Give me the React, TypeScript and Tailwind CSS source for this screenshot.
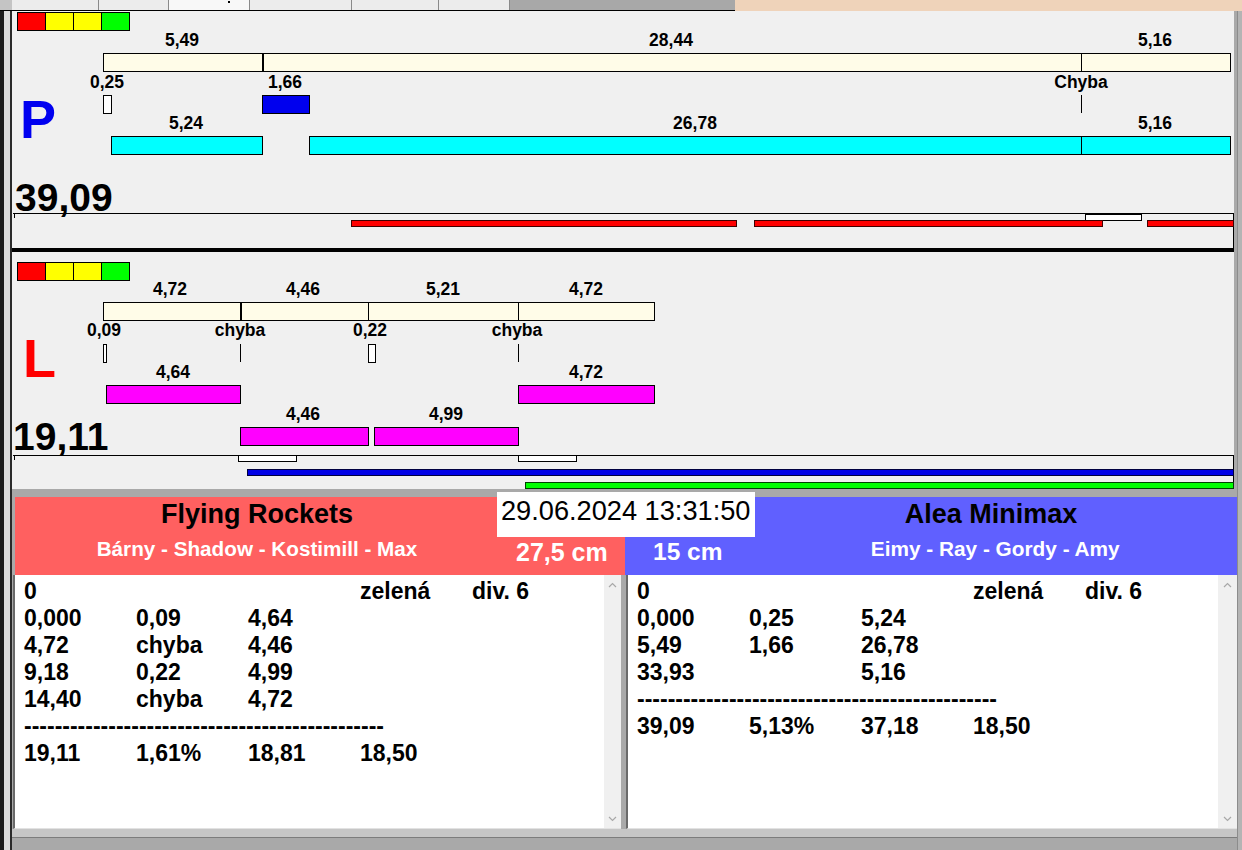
import React from 'react';

type R = { x: number; y: number; w: number; h: number; c: string };
type T = { x: number; y: number; t: string };

// all coordinates are page pixels, shifted by the panel origin when drawn
const pRects: R[] = [
  { x: 103, y: 53, w: 160, h: 19, c: 'border border-black bg-[#fffce8]' },
  { x: 263, y: 53, w: 819, h: 19, c: 'border border-black bg-[#fffce8]' },
  { x: 1081, y: 53, w: 150, h: 19, c: 'border border-black bg-[#fffce8]' },
  { x: 103, y: 95, w: 9, h: 19, c: 'border border-black bg-white' },
  { x: 262, y: 95, w: 48, h: 19, c: 'border border-black bg-[#0000ee]' },
  { x: 1081, y: 95, w: 1, h: 18, c: 'bg-black' },
  { x: 111, y: 136, w: 152, h: 19, c: 'border border-black bg-[#00ffff]' },
  { x: 309, y: 136, w: 773, h: 19, c: 'border border-black bg-[#00ffff]' },
  { x: 1081, y: 136, w: 150, h: 19, c: 'border border-black bg-[#00ffff]' },
  { x: 13, y: 213, w: 1221, h: 1, c: 'bg-black' },
  { x: 1233, y: 213, w: 1, h: 35, c: 'bg-black' },
  { x: 14, y: 213, w: 1, h: 5, c: 'bg-black' },
  { x: 1085, y: 214, w: 57, h: 7, c: 'border border-black bg-white' },
  { x: 351, y: 220, w: 386, h: 7, c: 'border border-[#400000] bg-[#ff0000]' },
  { x: 754, y: 220, w: 349, h: 7, c: 'border border-[#400000] bg-[#ff0000]' },
  { x: 1147, y: 220, w: 87, h: 7, c: 'border border-[#400000] bg-[#ff0000]' },
];

const pLabels: T[] = [
  { x: 182, y: 41, t: '5,49' },
  { x: 671, y: 41, t: '28,44' },
  { x: 1155, y: 41, t: '5,16' },
  { x: 107, y: 83, t: '0,25' },
  { x: 285, y: 83, t: '1,66' },
  { x: 1081, y: 83, t: 'Chyba' },
  { x: 186, y: 124, t: '5,24' },
  { x: 695, y: 124, t: '26,78' },
  { x: 1155, y: 124, t: '5,16' },
];

const lRects: R[] = [
  { x: 103, y: 302, w: 138, h: 19, c: 'border border-black bg-[#fffce8]' },
  { x: 241, y: 302, w: 128, h: 19, c: 'border border-black bg-[#fffce8]' },
  { x: 368, y: 302, w: 151, h: 19, c: 'border border-black bg-[#fffce8]' },
  { x: 518, y: 302, w: 137, h: 19, c: 'border border-black bg-[#fffce8]' },
  { x: 103, y: 344, w: 4, h: 19, c: 'border border-black bg-white' },
  { x: 240, y: 344, w: 1, h: 18, c: 'bg-black' },
  { x: 368, y: 344, w: 8, h: 19, c: 'border border-black bg-white' },
  { x: 518, y: 344, w: 1, h: 18, c: 'bg-black' },
  { x: 106, y: 385, w: 135, h: 19, c: 'border border-black bg-[#ff00ff]' },
  { x: 518, y: 385, w: 137, h: 19, c: 'border border-black bg-[#ff00ff]' },
  { x: 240, y: 427, w: 129, h: 19, c: 'border border-black bg-[#ff00ff]' },
  { x: 374, y: 427, w: 145, h: 19, c: 'border border-black bg-[#ff00ff]' },
  { x: 13, y: 455, w: 1221, h: 1, c: 'bg-black' },
  { x: 1233, y: 455, w: 1, h: 34, c: 'bg-black' },
  { x: 14, y: 455, w: 1, h: 5, c: 'bg-black' },
  { x: 238, y: 455, w: 59, h: 7, c: 'border border-black bg-white' },
  { x: 518, y: 455, w: 59, h: 7, c: 'border border-black bg-white' },
  { x: 247, y: 469, w: 987, h: 7, c: 'border border-[#000040] bg-[#0000e6]' },
  { x: 525, y: 482, w: 709, h: 7, c: 'border border-[#004000] bg-[#00ff00]' },
];

const lLabels: T[] = [
  { x: 170, y: 290, t: '4,72' },
  { x: 303, y: 290, t: '4,46' },
  { x: 443, y: 290, t: '5,21' },
  { x: 586, y: 290, t: '4,72' },
  { x: 104, y: 331, t: '0,09' },
  { x: 240, y: 331, t: 'chyba' },
  { x: 370, y: 331, t: '0,22' },
  { x: 517, y: 331, t: 'chyba' },
  { x: 173, y: 373, t: '4,64' },
  { x: 586, y: 373, t: '4,72' },
  { x: 303, y: 415, t: '4,46' },
  { x: 446, y: 415, t: '4,99' },
];

const leftRows = [
  ['0', '', '', 'zelená', 'div. 6'],
  ['0,000', '0,09', '4,64'],
  ['4,72', 'chyba', '4,46'],
  ['9,18', '0,22', '4,99'],
  ['14,40', 'chyba', '4,72'],
  ['-'],
  ['19,11', '1,61%', '18,81', '18,50'],
];

const rightRows = [
  ['0', '', '', 'zelená', 'div. 6'],
  ['0,000', '0,25', '5,24'],
  ['5,49', '1,66', '26,78'],
  ['33,93', '', '5,16'],
  ['-'],
  ['39,09', '5,13%', '37,18', '18,50'],
];

const DASHES = '-'.repeat(47);

function Legend({ ox, oy, x, y }: { ox: number; oy: number; x: number; y: number }) {
  return (
    <div className="absolute flex" style={{ left: x - ox, top: y - oy }}>
      <div className="h-[19px] w-[29px] border border-black bg-[#ff0000]" />
      <div className="-ml-px h-[19px] w-[29px] border border-black bg-[#ffff00]" />
      <div className="-ml-px h-[19px] w-[29px] border border-black bg-[#ffff00]" />
      <div className="-ml-px h-[19px] w-[29px] border border-black bg-[#00ff00]" />
    </div>
  );
}

function Chart({
  ox,
  oy,
  legendY,
  rects,
  labels,
  letter,
  letterCls,
  letterX,
  letterY,
  total,
  totalX,
  totalY,
}: {
  ox: number;
  oy: number;
  legendY: number;
  rects: R[];
  labels: T[];
  letter: string;
  letterCls: string;
  letterX: number;
  letterY: number;
  total: string;
  totalX: number;
  totalY: number;
}) {
  return (
    <div className="relative h-[237px] w-[1222px] overflow-hidden bg-[#f0f0f0]">
      <Legend ox={ox} oy={oy} x={17} y={legendY} />
      {rects.map((r, i) => (
        <div
          key={i}
          className={`absolute ${r.c}`}
          style={{ left: r.x - ox, top: r.y - oy, width: r.w, height: r.h }}
        />
      ))}
      {labels.map((l, i) => (
        <span
          key={i}
          className="absolute -translate-x-1/2 -translate-y-1/2 whitespace-nowrap text-[17.5px] font-bold leading-none text-black"
          style={{ left: l.x - ox, top: l.y - oy }}
        >
          {l.t}
        </span>
      ))}
      <span
        className={`absolute -translate-y-1/2 text-[54px] font-bold leading-none ${letterCls}`}
        style={{ left: letterX - ox, top: letterY - oy }}
      >
        {letter}
      </span>
      <span
        className="absolute -translate-y-1/2 text-[39px] font-bold leading-none text-black"
        style={{ left: totalX - ox, top: totalY - oy }}
      >
        {total}
      </span>
    </div>
  );
}

function Chevron({ up }: { up: boolean }) {
  return (
    <svg width="9" height="6" viewBox="0 0 9 6" className="block">
      <polyline
        points={up ? '1,5 4.5,1.5 8,5' : '1,1 4.5,4.5 8,1'}
        fill="none"
        stroke="#a8a8a8"
        strokeWidth="1.2"
      />
    </svg>
  );
}

function ListPanel({ rows, width, sb }: { rows: string[][]; width: string; sb: string }) {
  return (
    <div className={`flex h-[254px] border-l-2 border-b border-l-[#6a6a6a] border-b-[#e2e2e2] bg-white ${width}`}>
      <div className="flex-1 pl-[9px] pt-[3px] text-[23px] font-bold leading-[27px] text-black">
        {rows.map((row, i) => (
          <div key={i} className="flex h-[27px] whitespace-nowrap">
            {row[0] === '-' ? (
              <span>{DASHES}</span>
            ) : (
              row.map((c, j) => (
                <span key={j} className="w-[112px] shrink-0">
                  {c}
                </span>
              ))
            )}
          </div>
        ))}
      </div>
      <div className={`flex flex-col items-center justify-between bg-[#f0f0f0] pt-[7px] pb-[6px] ${sb}`}>
        <Chevron up />
        <Chevron up={false} />
      </div>
    </div>
  );
}

export default function App() {
  return (
    <div className="flex h-[850px] w-[1242px] flex-col overflow-hidden bg-[#a9a9a9] font-['Liberation_Sans',Arial,sans-serif]">
      {/* tab strip */}
      <div className="flex h-[11px] shrink-0">
        <div className="flex w-[735px] border-b border-black bg-[#e4e4e4]">
          <div className="w-[12px] bg-[#c4c4c4]" />
          <div className="w-[87px] border-r border-[#8a8a8a] bg-[#ececec]" />
          <div className="w-[70px] border-r border-[#8a8a8a] bg-[#ececec]" />
          <div className="relative w-[81px] border-r border-[#8a8a8a] bg-[#f8f8f8]">
            <div className="absolute left-[59px] top-[1px] h-[2px] w-[2px] bg-black" />
          </div>
          <div className="w-[102px] border-r border-[#8a8a8a] bg-[#ececec]" />
          <div className="w-[87px] border-r border-[#8a8a8a] bg-[#ececec]" />
          <div className="w-[71px] border-r border-[#8a8a8a] bg-[#ececec]" />
          <div className="flex-1 bg-[#a8a8a8]" />
        </div>
        <div className="flex-1 bg-[#efd3ba]" />
      </div>

      <div className="flex flex-1">
        {/* left frame */}
        <div className="flex w-[12px] shrink-0">
          <div className="w-[4px] bg-[#1c1c1c]" />
          <div className="w-[6px] bg-[#dcdcdc]" />
          <div className="w-[2px] bg-[#2a2a2a]" />
        </div>

        {/* main column */}
        <div className="flex w-[1225px] flex-col">
          <Chart
            ox={12}
            oy={11}
            legendY={12}
            rects={pRects}
            labels={pLabels}
            letter="P"
            letterCls="text-[#0000f0]"
            letterX={20}
            letterY={119}
            total="39,09"
            totalX={15}
            totalY={197}
          />
          <div className="h-[4px] w-[1222px] bg-black" />
          <Chart
            ox={12}
            oy={252}
            legendY={262}
            rects={lRects}
            labels={lLabels}
            letter="L"
            letterCls="text-[#ff0000]"
            letterX={23}
            letterY={358}
            total="19,11"
            totalX={13}
            totalY={436}
          />
          <div className="h-[8px]" />

          {/* team headers */}
          <div className="relative ml-[3px] flex h-[78px] w-[1222px]">
            <div className="flex w-[610px] flex-col bg-[#ff6060]">
              <div className="flex h-[35px] w-[484px] items-center justify-center text-[27px] font-bold leading-none text-black">
                Flying Rockets
              </div>
              <div className="flex items-start">
                <div className="mt-[7px] w-[484px] text-center text-[20.7px] font-bold leading-none text-white">
                  Bárny - Shadow - Kostimill - Max
                </div>
                <div className="ml-[17px] mt-[8px] whitespace-nowrap text-[25px] font-bold leading-none text-white">
                  27,5 cm
                </div>
              </div>
            </div>
            <div className="flex flex-1 flex-col bg-[#6060ff]">
              <div className="flex h-[35px] items-center justify-center pl-[130px] pr-[10px] text-[27px] font-bold leading-none text-black">
                Alea Minimax
              </div>
              <div className="flex items-start">
                <div className="ml-[28px] mt-[8px] whitespace-nowrap text-[24.5px] font-bold leading-none text-white">
                  15 cm
                </div>
                <div className="mt-[7px] flex-1 pl-[31px] text-center text-[20.8px] font-bold leading-none text-white">
                  Eimy - Ray - Gordy - Amy
                </div>
              </div>
            </div>
            <div className="absolute left-[482px] top-[-5px] h-[45px] w-[258px] bg-white pl-[4px] pt-[5px] text-[27.2px] leading-none text-black">
              29.06.2024 13:31:50
            </div>
          </div>

          {/* result lists */}
          <div className="ml-[1px] flex gap-[5px]">
            <ListPanel rows={leftRows} width="w-[608px]" sb="w-[17px]" />
            <ListPanel rows={rightRows} width="w-[611px]" sb="w-[19px]" />
          </div>
          <div className="h-[9px] border-b border-[#7c7c7c] bg-[#c6c6c6]" />
        </div>

        {/* right frame */}
        <div className="w-[5px] shrink-0 border-l border-[#8c8c8c] bg-[#b4b4b4]" />
      </div>
    </div>
  );
}
